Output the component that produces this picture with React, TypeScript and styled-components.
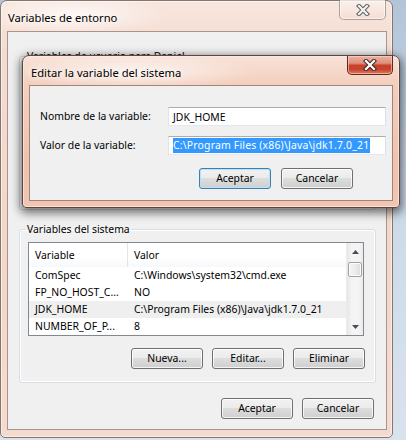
import React from 'react';
import styled, { createGlobalStyle } from 'styled-components';

const FONT = `"Noto Sans", "Open Sans", sans-serif`;

const Global = createGlobalStyle`
  html, body { margin: 0; padding: 0; }
  body {
    width: 406px;
    height: 440px;
    overflow: hidden;
    background: linear-gradient(180deg, #b2c4d9 0%, #c9d7e6 35%, #d9e3ee 100%);
    font-family: ${FONT};
    font-size: 10.4px;
    color: #000;
  }
  * { box-sizing: border-box; }
`;

const Desktop = styled.div`
  position: relative;
  width: 406px;
  height: 440px;
`;

const Window = styled.div`
  width: 393px;
  height: 438px;
  border: 1px solid #85766f;
  border-radius: 7px 7px 5px 5px;
  padding: 0 5px 7px 6px;
  display: flex;
  flex-direction: column;
  background:
    radial-gradient(ellipse 140px 30px at 70px 14px, rgba(255,255,255,0.75), rgba(255,255,255,0) 70%),
    linear-gradient(180deg, #f8e6de 0%, #f4dbd0 12%, #f3d6c9 60%, #f5dbcf 100%);
  box-shadow: inset 0 0 0 1px rgba(255,255,255,0.55);
`;

const TitleBar = styled.div<{ $h: number }>`
  height: ${p => p.$h}px;
  flex: none;
  display: flex;
  justify-content: space-between;
  align-items: flex-start;
`;

const TitleText = styled.div<{ $pt: number; $pl: number }>`
  padding-top: ${p => p.$pt}px;
  padding-left: ${p => p.$pl}px;
  line-height: 15px;
  font-size: 11.2px;
  color: #000;
  text-shadow: 0 0 6px rgba(255,255,255,0.95), 0 0 10px rgba(255,255,255,0.8);
  white-space: nowrap;
`;

const CloseButton = styled.div<{ $active?: boolean; $w: number; $h: number; $mr: number; $mt: number }>`
  width: ${p => p.$w}px;
  height: ${p => p.$h}px;
  margin-right: ${p => p.$mr}px;
  margin-top: ${p => p.$mt}px;
  border: 1px solid ${p => (p.$active ? '#5c2a20' : 'rgba(90,70,62,0.45)')};
  border-top: none;
  border-radius: 0 0 5px 5px;
  display: flex;
  align-items: center;
  justify-content: center;
  background: ${p =>
    p.$active
      ? 'linear-gradient(180deg, #eab3a5 0%, #e08e7b 40%, #c8402a 52%, #c9442c 75%, #e07a5f 100%)'
      : 'linear-gradient(180deg, rgba(255,255,255,0.35) 0%, rgba(255,255,255,0.15) 50%, rgba(240,200,185,0.2) 100%)'};
  box-shadow: ${p =>
    p.$active ? 'inset 0 0 0 1px rgba(255,220,210,0.55)' : 'inset 0 0 0 1px rgba(255,255,255,0.6)'};
`;

const CloseGlyph: React.FC<{ active?: boolean }> = ({ active }) => (
  <svg width="14" height="12" viewBox="0 0 14 12">
    <path
      d="M3 2 L11 10 M11 2 L3 10"
      stroke={active ? '#3a2a26' : '#5f5f5f'}
      strokeWidth="4.2"
      strokeLinecap="square"
      fill="none"
    />
    <path
      d="M3 2 L11 10 M11 2 L3 10"
      stroke={active ? '#ffffff' : '#f4f4f4'}
      strokeWidth="2.2"
      strokeLinecap="square"
      fill="none"
    />
  </svg>
);

const Client = styled.div`
  flex: 1;
  background: #f0f0f0;
  border: 1px solid #a8948b;
  display: flex;
  flex-direction: column;
`;

const Group = styled.fieldset<{ $mt: number }>`
  margin: ${p => p.$mt}px 0 0 11px;
  width: 357px;
  border: 1px solid #d5dfe5;
  border-radius: 3px;
  box-shadow: inset 0 0 0 1px #ffffff;
  padding: 5px 8px 13px 8px;
  min-width: 0;
`;

const Legend = styled.legend`
  padding: 0 1px;
  margin-left: -2px;
  line-height: 15px;
  font-size: 10.4px;
`;

const CoveredBody = styled.div`
  height: 127px;
`;

const ListView = styled.div`
  width: 336px;
  height: 94px;
  border: 1px solid #828790;
  background: #fff;
  display: flex;
  overflow: hidden;
`;

const ListBody = styled.div`
  flex: 1;
  display: flex;
  flex-direction: column;
`;

const HeaderRow = styled.div`
  height: 24px;
  display: grid;
  grid-template-columns: 99px 1fr;
  align-items: center;
  background: linear-gradient(180deg, #ffffff 0%, #ffffff 60%, #f7f8fa 100%);
`;

const HeaderCell = styled.div<{ $sep?: boolean }>`
  height: 100%;
  display: flex;
  align-items: center;
  padding-left: 6px;
  border-right: ${p => (p.$sep ? '1px solid #e3e5e8' : 'none')};
  white-space: nowrap;
`;

const Row = styled.div<{ $selected?: boolean }>`
  height: 17px;
  display: grid;
  grid-template-columns: 99px 1fr;
  align-items: center;
  background: ${p => (p.$selected ? '#efefef' : 'transparent')};
`;

const Cell = styled.div`
  padding-left: 6px;
  white-space: nowrap;
  overflow: hidden;
  line-height: 17px;
`;

const ScrollBar = styled.div`
  width: 17px;
  flex: none;
  display: flex;
  flex-direction: column;
  background: linear-gradient(90deg, #e6e6e6 0%, #f4f4f4 30%, #f4f4f4 70%, #ececec 100%);
  border-left: 1px solid #ececec;
`;

const ScrollArrow = styled.div`
  height: 17px;
  display: flex;
  align-items: center;
  justify-content: center;
`;

const Thumb = styled.div<{ $mt: number }>`
  margin: ${p => p.$mt}px 1px 0 1px;
  height: 15px;
  border: 1px solid #a1a1a1;
  border-radius: 2px;
  background: linear-gradient(90deg, #f4f4f4 0%, #ececec 50%, #dcdcdc 100%);
  box-shadow: inset 0 0 0 1px #fcfcfc;
`;

const ScrollSpacer = styled.div`
  flex: 1;
`;

const Arrow: React.FC<{ up?: boolean }> = ({ up }) => (
  <svg width="7" height="4" viewBox="0 0 7 4">
    <path d={up ? 'M0 4 L3.5 0 L7 4 Z' : 'M0 0 L3.5 4 L7 0 Z'} fill="#4d4d4d" />
  </svg>
);

const ButtonRow = styled.div<{ $mt: number; $pr: number; $gap: number }>`
  display: flex;
  justify-content: flex-end;
  gap: ${p => p.$gap}px;
  margin-top: ${p => p.$mt}px;
  padding-right: ${p => p.$pr}px;
`;

const Button = styled.button<{ $default?: boolean }>`
  width: 72px;
  height: 21px;
  padding: 0;
  font-family: ${FONT};
  font-size: 10.4px;
  color: #000;
  border: 1px solid ${p => (p.$default ? '#3c7fb1' : '#707070')};
  border-radius: 3px;
  background: linear-gradient(180deg, #f2f2f2 0%, #ebebeb 48%, #dddddd 50%, #cfcfcf 100%);
  box-shadow: inset 0 0 0 1px ${p => (p.$default ? '#b6e3f8' : 'rgba(255,255,255,0.75)')};
  line-height: 17px;
`;

const Dialog = styled.div`
  position: absolute;
  left: 22px;
  top: 55px;
  width: 378px;
  height: 153px;
  border: 1px solid #5a4840;
  border-radius: 7px 7px 4px 4px;
  padding: 0 6px 6px 6px;
  display: flex;
  flex-direction: column;
  background:
    radial-gradient(ellipse 180px 26px at 110px 16px, rgba(255,255,255,0.7), rgba(255,255,255,0) 70%),
    linear-gradient(180deg, #f8e2d8 0%, #f3cfbe 18%, #efc3ae 70%, #f0c6b2 100%);
  box-shadow:
    inset 0 0 0 1px rgba(255,235,225,0.7),
    0 3px 10px 2px rgba(0,0,0,0.55);
`;

const DialogClient = styled.div`
  flex: 1;
  background: #f0f0f0;
  border: 1px solid #a0857a;
  padding: 21px 6px 0 10px;
  display: flex;
  flex-direction: column;
`;

const FieldGrid = styled.div`
  display: grid;
  grid-template-columns: 128px 218px;
  row-gap: 10px;
  align-items: center;
`;

const FieldLabel = styled.div`
  line-height: 15px;
  white-space: nowrap;
`;

const TextBox = styled.div`
  height: 19px;
  border: 1px solid #abadb3;
  border-left-color: #e2e3ea;
  border-right-color: #dbdfe6;
  border-bottom-color: #e3e9ef;
  background: #fff;
  padding: 0 0 0 4px;
  display: flex;
  align-items: center;
  white-space: nowrap;
  overflow: hidden;
`;

const Selected = styled.span`
  background: #3399ff;
  color: #fff;
  line-height: 15px;
  letter-spacing: 0.2px;
  padding-right: 1px;
`;

const sysRows = [
  ['ComSpec', 'C:\\Windows\\system32\\cmd.exe'],
  ['FP_NO_HOST_C...', 'NO'],
  ['JDK_HOME', 'C:\\Program Files (x86)\\Java\\jdk1.7.0_21'],
  ['NUMBER_OF_P...', '8'],
];

const VarList: React.FC<{ rows: string[][]; selected?: number }> = ({ rows, selected }) => (
  <ListView>
    <ListBody>
      <HeaderRow>
        <HeaderCell $sep>Variable</HeaderCell>
        <HeaderCell>Valor</HeaderCell>
      </HeaderRow>
      {rows.map((r, i) => (
        <Row key={r[0]} $selected={i === selected}>
          <Cell>{r[0]}</Cell>
          <Cell>{r[1]}</Cell>
        </Row>
      ))}
    </ListBody>
    <ScrollBar>
      <ScrollArrow>
        <Arrow up />
      </ScrollArrow>
      <Thumb $mt={2} />
      <ScrollSpacer />
      <ScrollArrow>
        <Arrow />
      </ScrollArrow>
    </ScrollBar>
  </ListView>
);

export default function App() {
  return (
    <Desktop>
      <Global />
      <Window>
        <TitleBar $h={30}>
          <TitleText $pt={9} $pl={1}>
            Variables de entorno
          </TitleText>
          <CloseButton $w={47} $h={20} $mr={1} $mt={-1}>
            <CloseGlyph />
          </CloseButton>
        </TitleBar>
        <Client>
          {/* user-variables group: only its caption peeks out above the modal dialog */}
          <Group $mt={17}>
            <Legend>Variables de usuario para Daniel</Legend>
            <CoveredBody />
          </Group>
          <Group $mt={12}>
            <Legend>Variables del sistema</Legend>
            <VarList rows={sysRows} selected={2} />
            <ButtonRow $mt={12} $pr={2} $gap={9}>
              <Button>Nueva...</Button>
              <Button>Editar...</Button>
              <Button>Eliminar</Button>
            </ButtonRow>
          </Group>
          <ButtonRow $mt={15} $pr={12} $gap={9}>
            <Button>Aceptar</Button>
            <Button>Cancelar</Button>
          </ButtonRow>
        </Client>
      </Window>
      <Dialog>
        <TitleBar $h={29}>
          <TitleText $pt={9} $pl={2}>
            Editar la variable del sistema
          </TitleText>
          <CloseButton $active $w={46} $h={19} $mr={0} $mt={0}>
            <CloseGlyph active />
          </CloseButton>
        </TitleBar>
        <DialogClient>
          <FieldGrid>
            <FieldLabel>Nombre de la variable:</FieldLabel>
            <TextBox>JDK_HOME</TextBox>
            <FieldLabel>Valor de la variable:</FieldLabel>
            <TextBox>
              <Selected>C:\Program Files (x86)\Java\jdk1.7.0_21</Selected>
            </TextBox>
          </FieldGrid>
          <ButtonRow $mt={13} $pr={33} $gap={10}>
            <Button $default>Aceptar</Button>
            <Button>Cancelar</Button>
          </ButtonRow>
        </DialogClient>
      </Dialog>
    </Desktop>
  );
}
